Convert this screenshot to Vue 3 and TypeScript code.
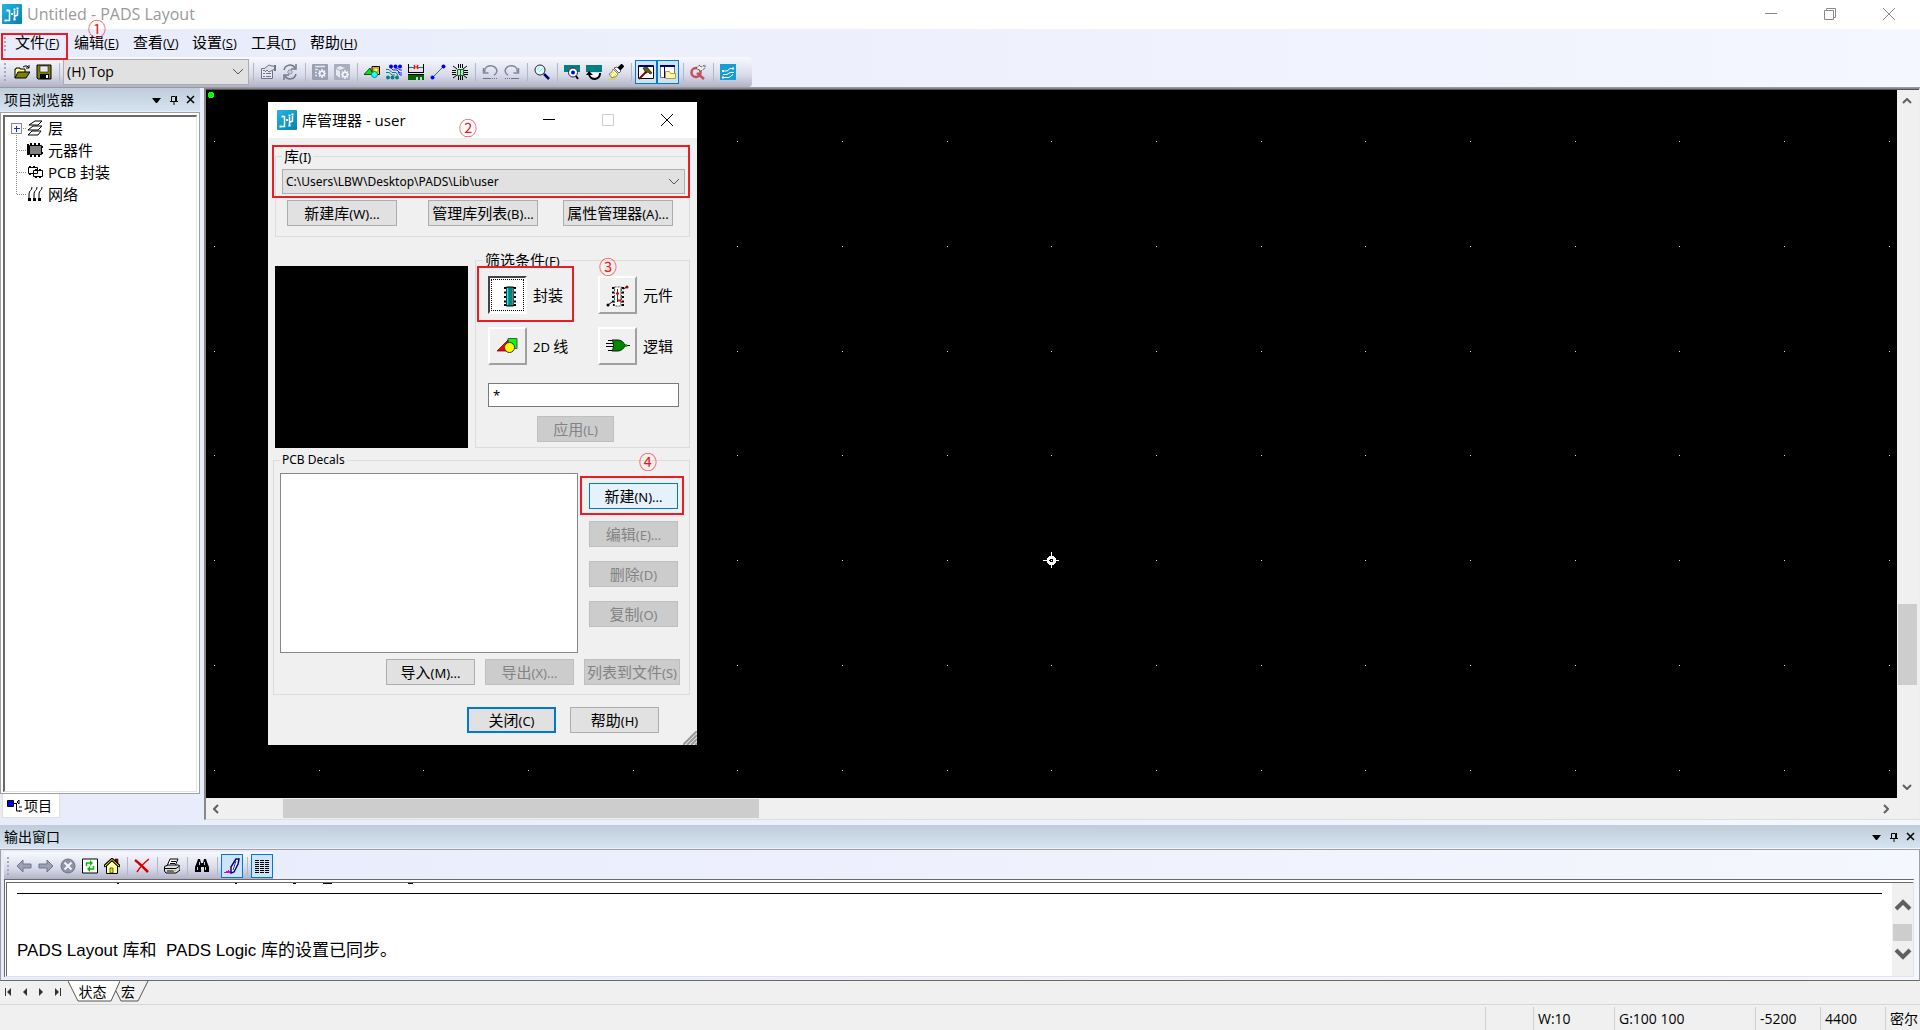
<script setup lang="ts">
import { ref } from 'vue'

interface Tool { icon?: string; label?: string; sep?: boolean; on?: boolean }
interface Mixed { cjk: string; key: string }

const sep: Tool = { sep: true }
const tool = (icon: string, label: string, on = false): Tool => ({ icon, label, on })

const menus: Mixed[] = [
  { cjk: '文件', key: 'F' },
  { cjk: '编辑', key: 'E' },
  { cjk: '查看', key: 'V' },
  { cjk: '设置', key: 'S' },
  { cjk: '工具', key: 'T' },
  { cjk: '帮助', key: 'H' },
]

const fileTools: Tool[] = [tool('open', '打开'), tool('save', '保存')]
const mainTools: Tool[] = [
  sep, tool('props', '特性'), tool('cycle', '循环'),
  sep, tool('gearA', '选项'), tool('gearB', '规则'),
  sep, tool('draft', '绘图'), tool('route', '布线'), tool('dim', '尺寸'), tool('line', '走线'), tool('bga', 'BGA'),
  sep, tool('undo', '撤销'), tool('redo', '重做'),
  sep, tool('zoom', '缩放'),
  sep, tool('board', '板'), tool('redraw', '重画'), tool('brush', '刷新'),
  sep, tool('hammer', '输出窗口', true), tool('folder', '项目浏览器', true),
  sep, tool('quick', '快速'),
  sep, tool('router', 'Router'),
]
const outputTools: Tool[] = [
  tool('back', '后退'), tool('next', '前进'), tool('stop', '停止'), tool('reload', '刷新'), tool('home', '主页'),
  sep, tool('cross', '清除'),
  sep, tool('print', '打印'),
  sep, tool('find', '查找'),
  sep, tool('pen', '记录', true),
  sep, tool('lines', '列表', true),
]

const icons: Record<string, string> = {
  open: '<path d="M1 14V5h1V4h4v1h5v3" fill="#ffff80" stroke="#000"/><path d="M1 14L4 8h12l-4 6z" fill="#808000" stroke="#000"/><path d="M9 3l2-1h2l2 2M15 1v3h-3" fill="none" stroke="#000"/>',
  save: '<path d="M1 1h14v14H2l-1-1z" fill="#808000" stroke="#000"/><path d="M4 2h8v6H4z" fill="#e8e8f0" stroke="#000" stroke-width=".5"/><path d="M4 10h9v5H4z" fill="#000"/><path d="M10 11h2v3h-2z" fill="#fff"/>',
  props: '<path d="M1.500 4.500h11v10h-11z" fill="#e8e9f1" stroke="#6f7486"/><path d="M3 9.500h2M6 9.500h5M3 12.500h2M6 12.500h5M3 6.500h3" stroke="#6f7486"/><path d="M5 4l4-3 3 1h3v3l-4 2-2 1-2-2-2 2" fill="#dfe0ea" stroke="#6f7486"/><path d="M14 1h2v6h-2z" fill="#6f7486"/>',
  cycle: '<path d="M2 6a6 6 0 0 1 11-2M14 10a6 6 0 0 1-11 2" fill="none" stroke="#747989" stroke-width="1.500"/><path d="M14 0v5H9M2 16v-5h5" fill="none" stroke="#747989" stroke-width="1.500"/><path d="M8 5v6M5 8h6M6 6l4 4M10 6l-4 4" stroke="#8b90a0"/><circle cx="8" cy="8" r="1" fill="#e0e2ec"/>',
  gearA: '<rect width="16" height="16" rx="1" fill="#9a9fb2"/><path d="M3 2.500h10M3 5.500h3M3 8.500h2M3 11.500h2" stroke="#e4e6ef" stroke-width="1.500"/><path d="M10 5v9M6 9.500h8M7 6.500l6 6M13 6.500l-6 6" stroke="#f2f3f9" stroke-width="1.500"/><circle cx="10" cy="9.500" r="3" fill="#f2f3f9"/><circle cx="10" cy="9.500" r="1.500" fill="#9a9fb2"/>',
  gearB: '<rect width="16" height="16" rx="1" fill="#a9aebf"/><path d="M2 4l4-2 5 2-5 2zM2 5v6l4 3V7z" fill="#e8eaf2"/><path d="M11 6v9M7 10.500h8M8 7.500l6 6M14 7.500l-6 6" stroke="#f4f5fa" stroke-width="1.500"/><circle cx="11" cy="10.500" r="3" fill="#f4f5fa"/><circle cx="11" cy="10.500" r="1.500" fill="#a4a9ba"/>',
  draft: '<path d="M8 2.500h7.500v8H8z" fill="#fc0" stroke="#000"/><path d="M10 4h4v4h-4z" fill="#ffff60" stroke="#806000" stroke-width=".6"/><path d="M0 10.500L6 4l3 6.500z" fill="#0e0" stroke="#000" stroke-width=".7"/><circle cx="10.500" cy="10.500" r="3" fill="#2ff" stroke="#088"/>',
  route: '<g fill="#00f"><circle cx="5" cy="2.500" r="2"/><circle cx="9.500" cy="2.500" r="2"/><circle cx="14" cy="2.500" r="2"/></g><g fill="#088080"><circle cx="2" cy="13.500" r="2"/><circle cx="6.500" cy="13.500" r="2"/><circle cx="11" cy="13.500" r="2"/></g><path d="M0 5.500h3l3 3h4l2 3M0 8.500h3l3 2.500h3" fill="none" stroke="#088080"/><path d="M5 4l2 2h4l3 3h2M9 4l2 0 3 2h2M12 8l2 3h2" stroke="#22f" fill="none"/>',
  dim: '<path d="M.500 0v8M15.500 0v8M0 8.500h16" stroke="#000"/><path d="M1 3.500h5M10 3.500h5" stroke="#088080"/><path d="M6 1l1 2-1 2M10 1L9 3l1 2" stroke="#f00" fill="none" stroke-width="1.500"/><path d="M0 10h16v6h-2v-3h-2v3h-2v-3H8v3H0z" fill="#060"/><path d="M0 10.500h16" stroke="#000"/>',
  line: '<path d="M3 13L13 3" stroke="#088080"/><circle cx="2.500" cy="13.500" r="2" fill="#00f"/><circle cx="13.500" cy="2.500" r="2" fill="#00f"/>',
  bga: '<path d="M6.500 0v4M8.500 0v4M10.500 0v4M6.500 12v4M8.500 12v4M10.500 12v4M0 6.500h4M0 8.500h4M0 10.500h4M12 6.500h4M12 8.500h4M12 10.500h4M1 2l4 3M15 2l-4 3M1 14l4-3M15 14l-4-3" stroke="#000"/><path d="M5.500 5.500h6v6h-6z" fill="#bde6c8" stroke="#087020"/><path d="M8.500 5v6" stroke="#087020"/>',
  undo: '<path d="M3 8A6 5 0 1 1 12 11" fill="none" stroke="#80859a" stroke-width="1.500"/><path d="M1.500 4v5h5" fill="none" stroke="#80859a" stroke-width="1.500"/><path d="M1 14.500h8M10 14.500h1M12 14.500h1M14 14.500h1" stroke="#70758a"/>',
  redo: '<path d="M13 8A6 5 0 1 0 4 11" fill="none" stroke="#80859a" stroke-width="1.500"/><path d="M14.500 4v5h-5" fill="none" stroke="#80859a" stroke-width="1.500"/><path d="M7 14.500h8M5 14.500h1M3 14.500h1M1 14.500h1" stroke="#70758a"/>',
  zoom: '<path d="M10 10l5 5" stroke="#000080" stroke-width="2.500"/><circle cx="6" cy="6" r="5" fill="#e0ffff" stroke="#222"/><path d="M3 6l3-3M5 8l4-4" stroke="#7ee" stroke-width="1"/>',
  board: '<path d="M0 1h16v7H0z" fill="#008080"/><circle cx="9" cy="8.500" r="4.500" fill="#fff" stroke="#222"/><circle cx="9" cy="8.500" r="2" fill="#00f"/><path d="M12 12l2 3" stroke="#000" stroke-width="2"/>',
  redraw: '<path d="M0 1h16v7H0z" fill="#008080"/><path d="M3 9h10v4H3z" fill="#fff"/><path d="M3 10a5 5 0 0 0 11-1" fill="none" stroke="#000" stroke-width="2"/><path d="M0 11l3-4 4 4z"/>',
  brush: '<path d="M15 1l-4 4" stroke="#000" stroke-width="4"/><path d="M9 3l4 4-2 2-5-5z" fill="#fff" stroke="#000" stroke-width=".6"/><path d="M5 5l5 5c-1 3-4 3-6 4l-3-4c3-1 3-3 4-5z" fill="#fffaa0" stroke="#555" stroke-width=".7"/><path d="M0 15.500h9M3 11l3-3M5 13l3-3" stroke="#dd0" stroke-dasharray="2 1"/>',
  hammer: '<path d="M.5 1.500h15v13H.5z" fill="#fff" stroke="#000"/><path d="M1 1h14v2H1z" fill="#000080"/><path d="M1 15l8-8" stroke="#800000" stroke-width="2"/><path d="M5 4l4-1 5 6-2 1-2-2-2 1z" fill="#606000" stroke="#000" stroke-width=".6"/>',
  folder: '<path d="M.5 1.500h14v12H.5z" fill="#fff" stroke="#777"/><path d="M0 1h15v2H0z" fill="#000080"/><path d="M4.500 3v11" stroke="#000080"/><path d="M5.500 14.500v-7h4l1 2h5v5z" fill="#fff6a0" stroke="#b09a50"/>',
  quick: '<circle cx="6" cy="8.500" r="4.500" fill="none" stroke="#c0505c" stroke-width="2.500"/><path d="M7 9l7 6" stroke="#c0505c" stroke-width="2.500"/><path d="M6 4l4-3 1 2 4-2v3l-4 3z" fill="#eee" stroke="#555" stroke-dasharray="2 1"/>',
  router: '<path d="M0 0h16v16H0z" fill="#159fd6"/><path d="M3 7h4l3-2.500h3M3 10.500h4l3-2h3M3 13.500h6l4-3" stroke="#fff" fill="none"/><path d="M12 3.500h2v2h-2zM12 8h2v1h-2zM2 6h2v2H2zM2 12.500h2v2H2z" fill="#fff"/>',
  back: '<path d="M1 8l6-6v4h8v4H7v4z" fill="#9ba1b3" stroke="#6f7587"/>',
  next: '<path d="M15 8L9 2v4H1v4h8v4z" fill="#9ba1b3" stroke="#6f7587"/>',
  stop: '<circle cx="8" cy="8" r="7" fill="#8e93a5" stroke="#70758a"/><path d="M4.500 4.500l7 7M11.500 4.500l-7 7" stroke="#f4f5fb" stroke-width="2"/>',
  reload: '<path d="M.5 1h15v14H.5z" fill="#fff" stroke="#000"/><path d="M4.500 8V5H9M11.500 8v3H7" fill="none" stroke="#0b0" stroke-width="1.500"/><path d="M8 2l3 3-3 3zM8 8l-3 3 3 3z" fill="#0b0"/>',
  home: '<path d="M11 1h3v5h-3z" fill="#a00" stroke="#000" stroke-width=".5"/><path d="M2.500 8v7.500h11V8L8 3z" fill="#ffffb0" stroke="#000"/><path d="M0 8.500L8 1l8 7.500" fill="none" stroke="#000" stroke-width="2.500"/><path d="M1 8l7-6.500L15 8" fill="none" stroke="#ff0"/><path d="M6 10h3v5H6z" fill="#ee0" stroke="#000" stroke-width=".6"/>',
  cross: '<path d="M1 2c4 3 9 8 13 12" stroke="#c00" stroke-width="2.500" fill="none"/><path d="M15 1C10 5 6 9 3 14" stroke="#e00" stroke-width="1.500" fill="none"/>',
  print: '<path d="M3 8l3-7h8l-3 7z" fill="#fff" stroke="#000"/><path d="M7 3.500h5M6 5.500h5" stroke="#000"/><path d="M.5 8.500L4 7h10l2 1v4l-4 3H2L.5 13z" fill="#ddd" stroke="#000"/><path d="M1 10.500h11l3-2M3 13h7" stroke="#000" fill="none"/><path d="M9 12h3v1H9z" fill="#cc0"/>',
  find: '<path d="M4 1h2l1 4h2l1-4h2l1 3 2 5v5h-5V9H7v5H1V9l2-5z" fill="#000"/><path d="M3.500 9v3M11.500 9v3M5.500 4v3M10.500 4v3" stroke="#fff" stroke-width=".8"/>',
  pen: '<path d="M12 1h3l-1 5-4 8-3 1V9z" fill="#fff" stroke="#000080" stroke-width="1.500"/><path d="M12 3l-3 9" stroke="#22f"/><path d="M0 15h6v-2H5v-1H4v1H2v1H0z" fill="#d0d"/>',
  lines: '<path d="M1 2.500h14M1 4.500h14M1 6.500h14M1 8.500h14M1 10.500h14M1 12.500h14M1 14.500h14" stroke="#000" stroke-dasharray="4 1"/>',
}

const appIcon = '<defs><linearGradient id="brand" x2="1" y2="1"><stop offset="0" stop-color="#1fb6e8"/><stop offset="1" stop-color="#0a7fae"/></linearGradient></defs><rect width="20" height="20" rx="1" fill="url(#brand)"/><path d="M4 16.500h3.500v-10H6M12.500 16V7M12.500 12.500l3-1.500V6" fill="none" stroke="#fff" stroke-width="1.500"/><path d="M2.500 15.500h2v2h-2zM4.500 5.500h2v2h-2zM11.500 14.500h2v2h-2zM14.500 3.500h2v2h-2zM11.500 4.500h2v2h-2zM9 9h2v2H9z" fill="#fff"/>'

const treeIcons: Record<string, string> = {
  layers: '<path d="M1 15l4-4h9l-3 4zM1 10l5-4h9l-4 4zM2 5l6-4h7l-4 4z" fill="#fff" stroke="#000"/>',
  parts: '<path d="M3 3.500h12M3 12.500h12" stroke="#000" stroke-width="5" stroke-dasharray="2 2"/><path d="M2.500 3.500h12v9h-12z" fill="#808080" stroke="#000"/><path d="M1 2v11M15 4v2M15 10v2" stroke="#000" stroke-width="2"/>',
  decal: '<path d="M1.500 3.500h9v6h-9zM6.500 6.500h9v6h-9z" fill="#fff" stroke="#000"/><path d="M2 2.500h2M6 2.500h2M8 5.500h2M12 5.500h2M8 13.500h2M12 13.500h2M2 10.500h2" stroke="#000"/>',
  nets: '<path d="M5 1c0 4-3 3-3 7v5M10 1c0 4-3 3-3 7v5M15 1c0 4-3 3-3 7v5" fill="none" stroke="#000"/><path d="M1 12h3v3H1zM6 12h3v3H6zM11 12h3v3h-3z" fill="#000"/>',
}
const tree = [
  { icon: 'layers', text: '层' },
  { icon: 'parts', text: '元器件' },
  { icon: 'decal', text: 'PCB 封装' },
  { icon: 'nets', text: '网络' },
]

const filterIcons: Record<string, string> = {
  decal: '<path d="M8 5h12M8 9.500h12M8 14h12M8 18.500h12M8 22h12" stroke="#000" stroke-width="2"/><path d="M10.500 4h7v19h-7z" fill="#008080" stroke="#000"/><path d="M11.500 5v17" stroke="#0ff" stroke-width="1.500"/><path d="M17 5v17" stroke="#999"/>',
  part: '<path d="M6 5h12M6 9.500h12M6 14h12M6 18.500h12M7 22h11" stroke="#000" stroke-width="2"/><path d="M8.500 4h7v19h-7z" fill="#fff" stroke="#555" stroke-dasharray="2 1"/><path d="M14.500 5v17" stroke="#aaa"/><path d="M11.500 6v13" stroke="#333"/><path d="M10 10.500h3M12 17.500h3" stroke="#e00" stroke-width="2"/><path d="M2 22l4-3M17 6l4-2" stroke="#000"/><circle cx="2" cy="22" r="1.500"/><circle cx="21" cy="4" r="1.500" fill="#a00"/>',
  lines: '<path d="M12 4.500h9v10h-9z" fill="#0f0" stroke="#555"/><path d="M1 17L12 6v11z" fill="#f00" stroke="#500" stroke-width=".7"/><circle cx="13.500" cy="13.500" r="5" fill="#ff0" stroke="#333"/>',
  logic: '<path d="M2 6.500h6M0 9.500h8M0 12.500h8M2 16.500h6M17 11.500h7" stroke="#000"/><path d="M6 6h6c4 0 6 3 7 5.500-1 3-4 5.500-7 5.500H6c2-4 2-7 0-11z" fill="#080" stroke="#020"/><circle cx="20" cy="11.500" r="1.500" fill="#0a0"/>',
}
const filters = [
  { icon: 'decal', latin: '', cjk: '封装', on: true },
  { icon: 'part', latin: '', cjk: '元件', on: false },
  { icon: 'lines', latin: '2D', cjk: '线', on: false },
  { icon: 'logic', latin: '', cjk: '逻辑', on: false },
]

const layer = ref('(H) Top')
const library = ref('C:\\Users\\LBW\\Desktop\\PADS\\Lib\\user')
const pattern = ref('*')

// Design grid in drawing units, origin marker in the middle
const dots: { x: number; y: number }[] = []
for (let r = 0; r < 7; r++) {
  for (let c = 0; c < 17; c++) {
    dots.push({ x: Math.round(8 + (c * 1570) / 15), y: Math.round(51 + (r * 419) / 4) })
  }
}

const states = [
  { cls: 'c-blank', text: '' },
  { cls: 'c-width', text: 'W:10' },
  { cls: 'c-grid', text: 'G:100 100' },
  { cls: 'c-x', text: '-5200' },
  { cls: 'c-y', text: '4400' },
  { cls: 'c-unit', text: '密尔' },
]
</script>

<template>
  <div class="app">
    <header class="titlebar">
      <svg class="logo" viewBox="0 0 20 20" v-html="appIcon"></svg>
      <span class="title">Untitled - PADS Layout</span>
      <div class="sysbtns">
        <button aria-label="最小化"><svg viewBox="0 0 12 12"><path d="M0 5.500h12" /></svg></button>
        <button aria-label="还原"><svg viewBox="0 0 12 12"><path d="M.5 2.500h9v9h-9zM2.500 2.500v-2h9v9h-2" /></svg></button>
        <button aria-label="关闭"><svg viewBox="0 0 12 12"><path d="M0 0l12 12M12 0L0 12" /></svg></button>
      </div>
    </header>

    <nav class="menubar">
      <span class="grip"></span>
      <button v-for="m in menus" :key="m.key">{{ m.cjk }}<span class="latin">(<u>{{ m.key }}</u>)</span></button>
    </nav>

    <div class="toolrow">
      <div class="toolbar">
        <span class="grip"></span>
        <button v-for="t in fileTools" :key="t.icon" class="tool" :aria-label="t.label">
          <svg viewBox="0 0 16 16" v-html="icons[t.icon!]"></svg>
        </button>
        <span class="sep"></span>
        <div class="layer">
          <select v-model="layer" aria-label="层"><option>(H) Top</option></select>
          <svg class="chev" viewBox="0 0 10 6"><path d="M0 0l5 5 5-5" /></svg>
        </div>
        <template v-for="(t, i) in mainTools" :key="i">
          <span v-if="t.sep" class="sep"></span>
          <button v-else class="tool" :class="{ on: t.on }" :aria-label="t.label">
            <svg viewBox="0 0 16 16" v-html="icons[t.icon!]"></svg>
          </button>
        </template>
      </div>
    </div>

    <main class="work">
      <aside class="browser">
        <div class="panehead">
          <span>项目浏览器</span>
          <div class="panebtns">
            <button aria-label="菜单"><svg viewBox="0 0 10 10"><path d="M0 3h9L5 8H4z" fill="#000" /></svg></button>
            <button aria-label="固定"><svg viewBox="0 0 10 10"><path d="M2.500 6V1.500h4V6M1 6.500h8M5 7v3M7.500 1v5" fill="none" stroke="#000" /></svg></button>
            <button aria-label="关闭"><svg viewBox="0 0 10 10"><path d="M1 1l7 7M8 1L1 8" stroke="#000" stroke-width="1.500" /></svg></button>
          </div>
        </div>
        <div class="treebox">
          <ul class="tree">
            <li v-for="(n, i) in tree" :key="n.icon">
              <svg class="joint" viewBox="0 0 20 22" shape-rendering="crispEdges">
                <path :d="i === 0 ? 'M9.5 12v10M10 11.5h10' : i === 3 ? 'M9.5 0v11.500h11' : 'M9.5 0v22M10 11.5h10'" fill="none" stroke="#888" stroke-dasharray="1 1" />
                <template v-if="i === 0">
                  <path d="M4.500 6.500h10v10h-10z" fill="#f6f8fc" stroke="#888" />
                  <path d="M7 11.500h6M9.500 9v6" stroke="#1a3a9a" />
                </template>
              </svg>
              <svg class="node" viewBox="0 0 16 16" v-html="treeIcons[n.icon]"></svg>
              <span>{{ n.text }}</span>
            </li>
          </ul>
        </div>
        <div class="panetabs">
          <button>
            <svg viewBox="0 0 16 14"><path d="M.5 1.500h6v6h-6z" fill="#00f" stroke="#000" /><path d="M7 4.500h3M9.500 4v8H13M10 3l2-2v4zM12 8h3M12 12h3" fill="none" stroke="#000" /></svg>
            <span>项目</span>
          </button>
        </div>
      </aside>

      <section class="design">
        <div class="upper">
          <svg class="canvas" shape-rendering="crispEdges">
            <circle cx="5" cy="5" r="3" fill="#0f0" />
            <rect v-for="(d, i) in dots" :key="i" :x="d.x" :y="d.y" width="1" height="1" fill="#ddd" />
            <g fill="#fff">
              <path d="M837 470h16v1h-16zM845 462h1v16h-1z" />
              <circle cx="845.500" cy="470.500" r="5" />
              <circle cx="845.500" cy="470.500" r="2" fill="#000" />
              <path d="M845 470h1v1h-1z" />
            </g>
          </svg>
          <div class="vbar">
            <svg viewBox="0 0 10 6"><path d="M1 5l4-4 4 4" /></svg>
            <span class="vthumb"></span>
            <svg viewBox="0 0 10 6"><path d="M1 1l4 4 4-4" /></svg>
          </div>
        </div>
        <div class="hbar">
          <svg viewBox="0 0 6 10"><path d="M5 1L1 5l4 4" /></svg>
          <div class="htrack"><span class="hthumb"></span></div>
          <svg viewBox="0 0 6 10"><path d="M1 1l4 4-4 4" /></svg>
        </div>
      </section>
    </main>

    <section class="output">
      <div class="panehead">
        <span>输出窗口</span>
        <div class="panebtns">
          <button aria-label="菜单"><svg viewBox="0 0 10 10"><path d="M0 3h9L5 8H4z" fill="#000" /></svg></button>
          <button aria-label="固定"><svg viewBox="0 0 10 10"><path d="M2.500 6V1.500h4V6M1 6.500h8M5 7v3M7.500 1v5" fill="none" stroke="#000" /></svg></button>
          <button aria-label="关闭"><svg viewBox="0 0 10 10"><path d="M1 1l7 7M8 1L1 8" stroke="#000" stroke-width="1.500" /></svg></button>
        </div>
      </div>
      <div class="outframe">
        <div class="outbar">
          <span class="grip"></span>
          <template v-for="(t, i) in outputTools" :key="i">
            <span v-if="t.sep" class="sep"></span>
            <button v-else class="tool" :class="{ on: t.on }" :aria-label="t.label">
              <svg viewBox="0 0 16 16" v-html="icons[t.icon!]"></svg>
            </button>
          </template>
        </div>
        <div class="outbox">
          <div class="outtext">
            <svg class="tails" viewBox="0 0 420 1" shape-rendering="crispEdges"><path d="M100 0h2v1h-2zM218 0h2v1h-2zM276 0h3v1h-3zM306 0h9v1h-9zM391 0h5v1h-5z" /></svg>
            <hr />
            <p>PADS Layout 库和&nbsp; PADS Logic 库的设置已同步。</p>
          </div>
          <div class="obar">
            <svg viewBox="0 0 18 14"><path d="M2 11l7-7 7 7" /></svg>
            <span></span>
            <svg viewBox="0 0 18 14"><path d="M2 3l7 7 7-7" /></svg>
          </div>
        </div>
      </div>
      <div class="sheettabs">
        <button class="nav" aria-label="第一个"><svg viewBox="0 0 8 8"><path d="M0 0h1v8H0zM6 0v8L2 4z" /></svg></button>
        <button class="nav" aria-label="上一个"><svg viewBox="0 0 8 8"><path d="M6 0v8L2 4z" /></svg></button>
        <button class="nav" aria-label="下一个"><svg viewBox="0 0 8 8"><path d="M2 0v8l4-4z" /></svg></button>
        <button class="nav" aria-label="最后一个"><svg viewBox="0 0 8 8"><path d="M2 0v8l4-4zM7 0h1v8H7z" /></svg></button>
        <button class="sheet first">
          <svg viewBox="0 0 52 21"><path d="M0 0l10 20h33L52 0" fill="#fff" stroke="#555" /></svg><span>状态</span>
        </button>
        <button class="sheet second">
          <svg viewBox="0 0 34 21"><path d="M1 10l5 10h17L33 0" fill="none" stroke="#555" /></svg><span>宏</span>
        </button>
      </div>
    </section>

    <footer class="status">
      <span v-for="s in states" :key="s.cls" :class="s.cls">{{ s.text }}</span>
    </footer>

    <div class="dialog" role="dialog" aria-label="库管理器">
      <header class="dlgtitle">
        <svg class="logo" viewBox="0 0 20 20" v-html="appIcon"></svg>
        <span>库管理器 - user</span>
        <div class="dlgsys">
          <button aria-label="最小化"><svg viewBox="0 0 12 12"><path d="M0 5.500h12" /></svg></button>
          <button aria-label="最大化" disabled><svg viewBox="0 0 12 12"><path d="M.5.5h11v11H.5z" /></svg></button>
          <button aria-label="关闭"><svg viewBox="0 0 12 12"><path d="M0 0l12 12M12 0L0 12" /></svg></button>
        </div>
      </header>
      <div class="dlgbody">
        <fieldset class="libs">
          <legend><label for="lib">库<span class="lt">(I)</span></label></legend>
          <div class="libsel">
            <select id="lib" v-model="library"><option>C:\Users\LBW\Desktop\PADS\Lib\user</option></select>
            <svg class="chev" viewBox="0 0 10 6"><path d="M0 0l5 5 5-5" /></svg>
          </div>
          <div class="libbtns">
            <button class="btn">新建库<span class="lt">(W)...</span></button>
            <button class="btn">管理库列表<span class="lt">(B)...</span></button>
            <button class="btn">属性管理器<span class="lt">(A)...</span></button>
          </div>
        </fieldset>

        <div class="middle">
          <div class="preview"></div>
          <fieldset class="filter">
            <legend>筛选条件<span class="lt">(F)</span></legend>
            <div class="kinds">
              <div v-for="f in filters" :key="f.icon" class="kind">
                <button :id="'k-' + f.icon" :class="{ down: f.on }" :aria-pressed="f.on">
                  <svg viewBox="0 0 24 24" v-html="filterIcons[f.icon]"></svg>
                </button>
                <label :for="'k-' + f.icon"><span v-if="f.latin" class="lt">{{ f.latin }}&nbsp;</span>{{ f.cjk }}</label>
              </div>
            </div>
            <input v-model="pattern" type="text" aria-label="筛选条件" />
            <button class="btn apply" disabled>应用<span class="lt">(L)</span></button>
          </fieldset>
        </div>

        <fieldset class="decals">
          <legend>PCB Decals</legend>
          <div class="decalrow">
            <div class="list"></div>
            <div class="side">
              <button class="btn hot">新建<span class="lt">(N)...</span></button>
              <button class="btn" disabled>编辑<span class="lt">(E)...</span></button>
              <button class="btn" disabled>删除<span class="lt">(D)</span></button>
              <button class="btn" disabled>复制<span class="lt">(O)</span></button>
            </div>
          </div>
          <div class="export">
            <button class="btn">导入<span class="lt">(M)...</span></button>
            <button class="btn" disabled>导出<span class="lt">(X)...</span></button>
            <button class="btn" disabled>列表到文件<span class="lt">(S)</span></button>
          </div>
        </fieldset>

        <div class="closing">
          <button class="btn default">关闭<span class="lt">(C)</span></button>
          <button class="btn">帮助<span class="lt">(H)</span></button>
        </div>
      </div>
      <svg class="resize" viewBox="0 0 14 14"><path d="M0 14L14 0M4 14L14 4M8 14l6-6M12 14l2-2" /></svg>
      <i class="mark m2"></i><i class="mark m3"></i><i class="mark m4"></i>
      <b class="num n2">②</b><b class="num n3">③</b><b class="num n4">④</b>
    </div>
    <i class="mark m1"></i><b class="num n1">①</b>
  </div>
</template>

<style>
body { margin: 0; background: #f0f0f0; }
</style>

<style scoped>
* { box-sizing: border-box; }
.app {
  position: relative;
  display: flex;
  flex-direction: column;
  min-height: 100vh;
  overflow: hidden;
  background: linear-gradient(90deg, #e8ebfa, #f4f7ff);
  font-family: "Open Sans", "Noto Sans CJK SC", sans-serif;
  font-size: 15px;
  line-height: 20px;
  color: #000;
}
button { font: inherit; color: inherit; border: 0; padding: 0; background: none; white-space: nowrap; }
svg { display: block; flex: none; }
.logo { width: 20px; height: 20px; }

.titlebar { display: flex; align-items: center; height: 29px; padding: 0 2px 1px; background: #fff; }
.title { margin-left: 5px; color: #999; font-size: 16px; }
.sysbtns { display: flex; margin-left: auto; gap: 1px; }
.sysbtns button { width: 58px; height: 28px; display: grid; place-items: center; }
.sysbtns svg, .dlgsys svg { width: 12px; height: 12px; fill: none; stroke: #888; }

.menubar { display: flex; align-items: center; height: 28px; padding-bottom: 2px; }
.menubar button { width: 59px; text-align: left; }
.menubar .grip { margin-right: 9px; }
.latin { font-size: 13px; }
.grip {
  width: 2px; height: 18px; margin: 0 4px;
  background: repeating-linear-gradient(#a5a9bb 0 2px, transparent 2px 4px);
}
.toolrow { height: 31px; border-bottom: 1px solid #9a9aa4; }
.toolbar {
  display: flex; align-items: center; width: max-content; height: 30px; padding-right: 13px;
  background: linear-gradient(#f8f9fe, #d9dbea 60%, #b2b2c6);
  border-radius: 0 4px 4px 0;
}
.toolbar .grip { margin-right: 5px; }
.tool { width: 22px; height: 24px; display: grid; place-items: center; }
.tool.on { background: #cce4f7; border: 1px solid #0078d7; }
.tool svg { width: 16px; height: 16px; }
.sep { width: 8px; height: 18px; background: linear-gradient(#b4b6c6, #b4b6c6) 4px 0 / 1px 100% no-repeat; }
.layer { position: relative; width: 186px; height: 26px; }
select { appearance: none; width: 100%; height: 100%; margin: 0; border: 1px solid #adadad; border-radius: 0; background: #e1e1e1; color: #000; font: inherit; padding: 0 3px; }
.layer select { font-size: 14px; }
.chev { position: absolute; right: 6px; top: 50%; margin-top: -3px; width: 10px; height: 6px; fill: none; stroke: #555; pointer-events: none; }

.work { display: flex; flex: 1; gap: 4px; padding-bottom: 5px; }
.browser { width: 200px; display: flex; flex-direction: column; }
.panehead {
  display: flex; align-items: center; justify-content: space-between; height: 23px; padding: 0 1px 0 4px;
  background: linear-gradient(#bfcddb, #d6e3f1); font-size: 14px;
}
.panebtns { display: flex; gap: 1px; }
.panebtns button { width: 16px; height: 16px; display: grid; place-items: center; }
.panebtns svg { width: 10px; height: 10px; }
.treebox { flex: 1; margin-top: 1px; border: 1px solid #a0a0a0; padding: 2px 2px 1px; background: #fff; }
.tree { height: 100%; margin: 0; padding: 0 0 0 2px; list-style: none; border: 1px solid #e3e3e3; border-top: 2px solid #696969; border-left: 2px solid #696969; }
.tree li { display: flex; align-items: center; height: 22px; }
.joint { width: 20px; height: 22px; }
.node { width: 16px; height: 16px; margin-right: 5px; }
.panetabs { height: 26px; padding-left: 2px; }
.panetabs button { display: flex; align-items: center; width: 58px; height: 24px; padding-left: 4px; background: #fff; border: 1px solid #ddd; border-top: 0; font-size: 14px; }
.panetabs svg { width: 16px; height: 14px; margin-right: 1px; }

.design { flex: 1; display: flex; flex-direction: column; min-width: 0; border: 1px solid #888; border-right-color: #eee; border-bottom-color: #ddd; border-left-width: 2px; }
.upper { display: flex; flex: 1; border-top: 1px solid #555; }
.canvas { flex: 1; width: 0; height: auto; background: #000; }
.vbar { display: flex; flex-direction: column; align-items: center; width: 22px; padding: 8px 2px 8px 0; background: #f0f0f0; }
.vbar svg, .obar svg, .hbar svg { fill: none; stroke: #606060; stroke-width: 2; }
.vbar svg { width: 10px; height: 6px; }
.vthumb { width: 19px; height: 81px; margin: auto 0 99px; background: #cdcdcd; }
.hbar { display: flex; align-items: center; height: 21px; padding: 0 30px 0 7px; background: #f0f0f0; }
.hbar svg { width: 6px; height: 10px; }
.htrack { flex: 1; height: 19px; padding-left: 64px; }
.hthumb { display: block; width: calc(30% - 4px); height: 100%; background: #cdcdcd; }

.outframe { margin-top: 1px; padding: 2px 5px 3px 3px; border: 1px solid #a0a0a0; border-bottom-color: #696969; }
.outbar { display: flex; align-items: center; width: max-content; height: 27px; background: linear-gradient(#f8f9fe, #d9dbea 60%, #b2b2c6); }
.outbar .grip { margin-right: 4px; margin-left: 3px; }
.outbox { display: flex; height: 98px; border: 1px solid #e3e3e3; border-top: 4px double #696969; border-left: 3px double #696969; background: #fff; }
.outtext { flex: 1; padding-left: 10px; font-family: "Liberation Sans", "Noto Sans CJK SC", sans-serif; font-size: 17px; }
.tails { width: 420px; height: 1px; }
.outtext hr { margin: 9px 10px 0 0; border: 0; border-top: 1px solid #000; }
.outtext p { margin: 47px 0 0; line-height: 20px; }
.obar { display: flex; flex-direction: column; align-items: center; width: 21px; padding: 15px 0; background: #f0f0f0; }
.obar svg { width: 18px; height: 14px; stroke-width: 4; }
.obar span { width: 19px; height: 18px; margin: 12px 0 6px; background: #cdcdcd; }

.sheettabs { display: flex; height: 24px; background: #f0f0f0; padding-left: 1px; border-bottom: 1px solid #d7d7d7; font-size: 14px; }
.nav { width: 16px; height: 22px; display: grid; place-items: center; }
.nav svg { width: 8px; height: 8px; fill: #333; }
.sheet { position: relative; height: 21px; }
.sheet svg { position: absolute; inset: 0; width: 100%; height: 100%; }
.sheet span { position: relative; }
.first { width: 52px; margin-left: 3px; padding-right: 3px; }
.second { width: 34px; margin-left: -5px; padding-right: 8px; }

.status { display: flex; justify-content: flex-end; height: 25px; padding-top: 2px; background: #f0f0f0; font-size: 14px; line-height: 24px; }
.status span { border-left: 1px solid #d0d0d0; padding-left: 4px; white-space: nowrap; overflow: hidden; }
.c-blank { width: 48px; }
.c-width { width: 81px; }
.c-grid { width: 141px; }
.c-x, .c-y { width: 65px; }
.c-unit { width: 35px; }

.dialog { position: absolute; left: 268px; top: 102px; width: 429px; background: #f0f0f0; }
.dlgtitle { display: flex; align-items: center; height: 36px; padding-left: 9px; background: #fff; }
.dlgtitle > span { margin-left: 5px; }
.dlgsys { display: flex; margin-left: auto; padding-right: 1px; }
.dlgsys button { width: 59px; height: 36px; display: grid; place-items: center; }
.dlgsys svg { stroke: #000; }
.dlgsys button:disabled svg { stroke: #ccc; }
.dlgbody { padding: 8px 7px 12px 5px; }
.lt { font-size: 13px; font-family: "Noto Sans", "Open Sans", sans-serif; }
fieldset { min-width: 0; margin: 0; padding: 0; border: 1px solid #dcdcdc; }
legend { height: 20px; padding: 0 2px; line-height: 20px; }
.btn { height: 26px; border: 1px solid #adadad; background: #e1e1e1; line-height: 22px; }
.btn:disabled { border-color: #bfbfbf; background: #ccc; color: #838383; }
.libs { margin-left: 2px; padding: 3px 4px 10px 6px; }
.libsel { position: relative; height: 25px; }
.libsel select { font-family: "Noto Sans", "Open Sans", sans-serif; font-size: 12px; }
.libbtns { display: grid; grid-template-columns: 141px 135px 110px; margin: 6px 0 0 5px; }
.libbtns .btn { width: 110px; }
.middle { display: flex; align-items: flex-end; margin: 13px 0 2px 2px; }
.preview { width: 193px; height: 182px; background: #000; }
.filter { flex: 1; margin-left: 7px; padding: 6px 11px 5px 12px; }
.filter legend { margin-left: -5px; }
.kinds { display: grid; grid-template-columns: 110px 1fr; row-gap: 13px; }
.kind { display: flex; align-items: center; gap: 6px; white-space: nowrap; }
.kind button { width: 39px; height: 38px; display: grid; place-items: center; border: 2px solid; border-color: #fff #a0a0a0 #a0a0a0 #fff; }
.kind button.down { border-color: #444 #fff #fff #444; background: #fff; outline: 1px dotted #000; outline-offset: -4px; }
.kind svg { width: 24px; height: 24px; }
.filter input { display: block; width: 191px; height: 24px; margin-top: 18px; padding: 0 4px; border: 1px solid #7a7a7a; background: #fff; font: 13px/20px "Noto Sans", sans-serif; }
.apply { display: block; width: 77px; margin: 9px 0 0 49px; }
.decals { padding: 3px 5px 9px 6px; }
.decals legend { margin-left: 0; font: 12px/20px "Noto Sans", "Open Sans", sans-serif; }
.decalrow { display: flex; gap: 11px; }
.list { width: 298px; height: 180px; border: 1px solid #828790; background: #fff; }
.side { display: flex; flex-direction: column; gap: 14px; padding-top: 10px; }
.side .btn { width: 89px; }
.side .hot { margin-bottom: -2px; border-color: #0078d7; background: #e5f1fb; }
.export { display: flex; justify-content: flex-end; gap: 10px; margin: 6px 4px 0 0; }
.export .btn { width: 89px; }
.export .btn:last-child { width: 96px; }
.closing { display: flex; justify-content: flex-end; gap: 14px; padding: 12px 31px 0 0; }
.closing .btn { width: 89px; }
.closing .default { border: 2px solid #0078d7; }
.resize { position: absolute; right: 0; bottom: 0; width: 14px; height: 14px; fill: none; stroke: #999; stroke-width: 2; }

.mark { position: absolute; border: 2px solid #ed1c24; pointer-events: none; }
.num { position: absolute; font: 400 18px/18px "Noto Sans CJK SC", sans-serif; color: #ed1c24; }
.m1 { left: 1px; top: 33px; width: 67px; height: 27px; }
.m2 { left: 4px; top: 43px; width: 418px; height: 53px; }
.m3 { left: 209px; top: 164px; width: 97px; height: 56px; }
.m4 { left: 312px; top: 374px; width: 104px; height: 39px; }
.n1 { left: 88px; top: 19px; }
.n2 { left: 191px; top: 16px; }
.n3 { left: 331px; top: 155px; }
.n4 { left: 371px; top: 350px; }
</style>
